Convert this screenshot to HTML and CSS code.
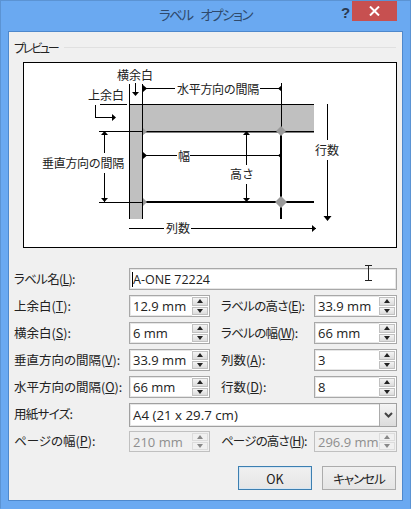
FILE: index.html
```html
<!DOCTYPE html>
<html lang="ja">
<head>
<meta charset="utf-8">
<title>ラベル オプション</title>
<link rel="stylesheet" href="styles.css">
</head>
<body>
<div class="window">
  <header class="titlebar">
    <span class="title">ラベル オプション</span>
    <span class="help">?</span>
    <span class="close"><svg width="11" height="10" viewBox="0 0 11 10"><path d="M1 .5 10 9.5M10 .5 1 9.5" stroke="#fff" stroke-width="2" fill="none"/></svg></span>
  </header>
  <main class="client">
    <div class="group"><span>プレビュー</span><i></i></div>
    <div class="preview">
      <svg class="diagram" width="374" height="186" viewBox="23 62 374 186">
        <g fill="#c0c0c0">
          <path d="M129 104H314V131H143V219H129Z"/>
        </g>
        <rect x="143" y="131" width="138" height="71" rx="4" fill="#fff"/>
        <g stroke="#000" stroke-width="1" fill="none" shape-rendering="crispEdges">
          <path d="M129.5 84V219M142.5 84V219M281.5 83V131M100 104.5H127M129 104.5H314M99 131.5H143M99 202.5H143"/>
          <path d="M143 88.5H175M260 88.5H281M143 155.5H177M190 155.5H281"/>
          <path d="M104.5 131V153M104.5 173V202M246.5 131V165M246.5 184V202"/>
          <path d="M327.5 104V140M327.5 160V220M129 228.5H164M191 228.5H316"/>
          <path d="M95.5 105V117.5H113M135.5 83V95"/>
        </g>
        <g stroke="#000" stroke-width="2" fill="none" shape-rendering="crispEdges">
          <path d="M143 202H314M281 131V219"/>
        </g>
        <rect x="143" y="131" width="171" height="1.5" fill="#000"/>
        <path d="M281 126 286 131 281 136 276 131ZM281 196 287 202 281 208 275 202Z" fill="#9a9a9a"/>
        <path d="M143 128 147 132 143 135ZM143 198 147 202 143 206Z" fill="#9a9a9a"/>
        <g fill="#000">
          <path d="M143 85V92L147 88.5ZM282 85V92L278 88.5ZM143 152V159L147 155.5ZM282 152V159L278 155.5Z"/>
          <path d="M101 135 104.5 131 108 135ZM101 198 104.5 202 108 198ZM243 135 246.5 131 250 135ZM243 198 246.5 202 250 198Z"/>
          <path d="M323.5 216H331.5L327.5 221ZM132 92H139L135.5 96ZM112 114V121L116 117.5ZM312 225V232L316 228.5Z"/>
        </g>
        <g class="dtext">
          <text x="117" y="80">横余白</text>
          <text x="88" y="100">上余白</text>
          <text class="long" x="177" y="94">水平方向の間隔</text>
          <text class="long" x="42" y="168">垂直方向の間隔</text>
          <text x="178" y="161">幅</text>
          <text x="230" y="179">高さ</text>
          <text x="315" y="155">行数</text>
          <text x="166" y="233">列数</text>
        </g>
      </svg>
    </div>
    <form class="form">
      <label class="tight">ラベル名(<u>L</u>):</label>
      <div class="field wide"><span class="caret"></span>A-ONE 72224</div>

      <label>上余白(<u>T</u>):</label>
      <div class="spin"><span class="val">12.9 mm</span><span class="arrows"><b class="up"></b><b class="dn"></b></span></div>
      <label class="second tight">ラベルの高さ(<u>E</u>):</label>
      <div class="spin"><span class="val">33.9 mm</span><span class="arrows"><b class="up"></b><b class="dn"></b></span></div>

      <label>横余白(<u>S</u>):</label>
      <div class="spin"><span class="val">6 mm</span><span class="arrows"><b class="up"></b><b class="dn"></b></span></div>
      <label class="second tight">ラベルの幅(<u>W</u>):</label>
      <div class="spin"><span class="val">66 mm</span><span class="arrows"><b class="up"></b><b class="dn"></b></span></div>

      <label>垂直方向の間隔(<u>V</u>):</label>
      <div class="spin"><span class="val">33.9 mm</span><span class="arrows"><b class="up"></b><b class="dn"></b></span></div>
      <label class="second">列数(<u>A</u>):</label>
      <div class="spin"><span class="val">3</span><span class="arrows"><b class="up"></b><b class="dn"></b></span></div>

      <label>水平方向の間隔(<u>O</u>):</label>
      <div class="spin"><span class="val">66 mm</span><span class="arrows"><b class="up"></b><b class="dn"></b></span></div>
      <label class="second">行数(<u>D</u>):</label>
      <div class="spin"><span class="val">8</span><span class="arrows"><b class="up"></b><b class="dn"></b></span></div>

      <label class="tight">用紙サイズ:</label>
      <div class="field wide select"><span class="val">A4 (21 x 29.7 cm)</span><span class="drop"><svg width="9" height="6" viewBox="0 0 9 6"><path d="M1 1 4.5 4.5 8 1" stroke="#444" stroke-width="2" fill="none"/></svg></span></div>

      <label>ページの幅(<u>P</u>):</label>
      <div class="spin off"><span class="val">210 mm</span><span class="arrows"><b class="up"></b><b class="dn"></b></span></div>
      <label class="second tighter">ページの高さ(<u>H</u>):</label>
      <div class="spin off"><span class="val">296.9 mm</span><span class="arrows"><b class="up"></b><b class="dn"></b></span></div>
    </form>
    <div class="buttons">
      <button type="button" class="btn default">OK</button>
      <button type="button" class="btn cancel">キャンセル</button>
    </div>
    <svg class="ibeam" width="9" height="16" viewBox="0 0 9 16"><path d="M1 .5H8M4.5 .5V15.5M1 15.5H8" stroke="#222" fill="none"/></svg>
  </main>
</div>
</body>
</html>
```

FILE: styles.css
```css
* { box-sizing: border-box; }
html, body { margin: 0; padding: 0; }
body {
  width: 411px;
  height: 509px;
  overflow: hidden;
  font-family: "Noto Sans CJK JP", "Noto Sans", sans-serif;
  font-feature-settings: "palt";
  font-size: 12.5px;
  color: #222;
}
.window {
  width: 411px;
  height: 509px;
  background: #6aa9f1;
  border: 1px solid #5b93d3;
  border-bottom-color: #6aa9f1;
  padding: 0 7px 7px;
  display: flex;
  flex-direction: column;
}
.titlebar {
  height: 30px;
  flex: none;
  display: flex;
  align-items: center;
  justify-content: center;
  position: relative;
}
.title { font-size: 13.5px; letter-spacing: -1.5px; word-spacing: 6px; color: #2f4a6c; margin-bottom: 4px; }
.help {
  position: absolute;
  left: 333px;
  top: 3px;
  font-family: "Liberation Sans", sans-serif;
  font-weight: bold;
  font-size: 15px;
  color: #2a3a50;
}
.close {
  position: absolute;
  right: 6px;
  top: 0;
  width: 45px;
  height: 20px;
  background: #c75050;
  display: flex;
  align-items: center;
  justify-content: center;
}
.client {
  flex: 1;
  background: #f0f0f0;
  border: 1px solid #4e88cc;
  padding: 7px 6px 0 5px;
  position: relative;
}
.group {
  display: flex;
  align-items: center;
  gap: 6px;
  height: 16px;
  font-size: 12px;
  letter-spacing: -2.2px;
}
.group i { flex: 1; height: 1px; background: #e0e0e0; }
.preview {
  margin: 7px 0 0 9px;
  width: 374px;
  height: 186px;
  background: #fff;
  border: 1px solid #000;
  overflow: hidden;
}
.diagram { display: block; margin: -1px; }
.dtext text { font-size: 12px; fill: #222; font-feature-settings: normal; }
.dtext .long { letter-spacing: -.3px; }
.form {
  margin-top: 20px;
  display: grid;
  grid-template-columns: 115px 81px 104px 83px;
  grid-auto-rows: 22px;
  row-gap: 5px;
}
.form label { display: flex; align-items: center; white-space: nowrap; padding-bottom: 2px; }
.form label.second { padding-left: 11px; }
.form label.tight { letter-spacing: -.7px; }
.form label.tighter { letter-spacing: -.8px; }
.form u { text-decoration-thickness: 1px; }
.form .wide { grid-column: 2 / 5; }
.field, .spin {
  display: flex;
  align-items: center;
  background: #fff;
  border: 1px solid #a8a8a8;
  font-family: "Open Sans", "Noto Sans", sans-serif;
  font-feature-settings: normal;
  font-size: 12.5px;
  color: #222;
  box-shadow: inset 0 0 0 1px #e6e6e6;
}
.spin { font-size: 13px; }
.field { padding-left: 2px; }
.caret { width: 1px; height: 15px; background: #000; margin-right: 0; }
.spin .val { flex: 1; padding-left: 3px; }
.arrows {
  width: 17px;
  height: 100%;
  display: flex;
  flex-direction: column;
  gap: 1px;
  background: #fff;
  padding: 1px 1px 1px 0;
}
.arrows b {
  flex: 1;
  background: linear-gradient(#f4f4f4, #dcdcdc);
  border: 1px solid #c0c0c0;
  display: flex;
  align-items: center;
  justify-content: center;
}
.arrows b::after {
  content: "";
  border-left: 3.5px solid transparent;
  border-right: 3.5px solid transparent;
}
.arrows .up::after { border-bottom: 4px solid #222; }
.arrows .dn::after { border-top: 4px solid #222; }
.select { height: 24px; padding-left: 2px; border-color: #a0a0a0; }
.select .val { flex: 1; font-size: 13.3px; padding-left: 1px; }
.drop {
  width: 17px;
  height: 100%;
  background: linear-gradient(#f4f4f4, #dcdcdc);
  border-left: 1px solid #ababab;
  display: flex;
  align-items: center;
  justify-content: center;
}
.spin.off { color: #8e8e8e; background: #f0f0f0; border-color: #c0c0c0; box-shadow: none; }
.spin.off .arrows { background: #f0f0f0; }
.spin.off .arrows b { background: #f0f0f0; border-color: #dcdcdc; }
.spin.off .up::after { border-bottom-color: #888; }
.spin.off .dn::after { border-top-color: #888; }
.form > :nth-last-child(1), .form > :nth-last-child(2), .form > :nth-last-child(3), .form > :nth-last-child(4) { margin-top: 1px; }
.buttons {
  margin-top: 14px;
  display: flex;
  justify-content: flex-end;
  gap: 10px;
}
.btn {
  width: 74px;
  height: 24px;
  padding: 0;
  border: 1px solid #acacac;
  background: linear-gradient(#f0f0f0, #e5e5e5);
  font-family: "Noto Sans CJK JP", sans-serif;
  font-feature-settings: "palt";
  font-size: 12.5px;
  color: #222;
}
.btn.cancel { letter-spacing: -1px; }
.btn.default { border-color: #3c7fb1; box-shadow: inset 0 0 0 1px #d6e6f3; }
.ibeam { position: absolute; left: 355px; top: 233px; }
```
